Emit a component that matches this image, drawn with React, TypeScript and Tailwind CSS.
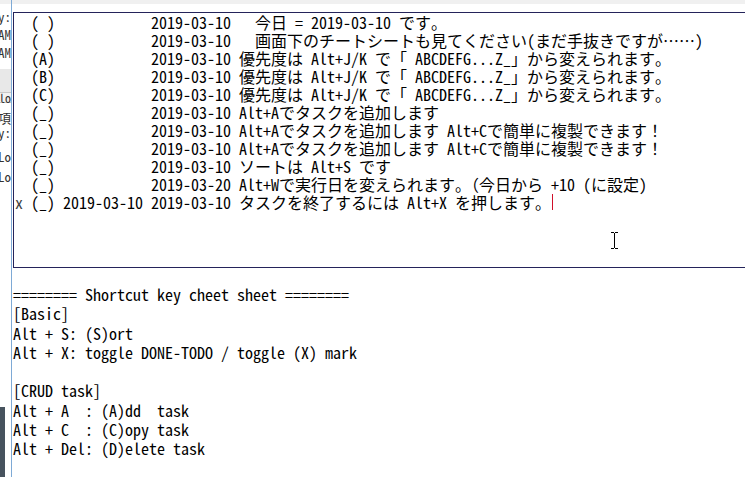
import React from "react";

const mono = {
  fontFamily: '"Noto Sans Mono CJK JP", "Noto Sans CJK JP", "Liberation Mono", monospace',
};

type Row = { mark?: string; pri: string; done?: string; date: string; text: string; caret?: boolean };

const rows: Row[] = [
  { pri: "( )", date: "2019-03-10", text: "\u3000今日 = 2019-03-10 です。" },
  { pri: "( )", date: "2019-03-10", text: "\u3000画面下のチートシートも見てください(まだ手抜きですが……)" },
  { pri: "(A)", date: "2019-03-10", text: "優先度は Alt+J/K で「 ABCDEFG...Z_」から変えられます。" },
  { pri: "(B)", date: "2019-03-10", text: "優先度は Alt+J/K で「 ABCDEFG...Z_」から変えられます。" },
  { pri: "(C)", date: "2019-03-10", text: "優先度は Alt+J/K で「 ABCDEFG...Z_」から変えられます。" },
  { pri: "(_)", date: "2019-03-10", text: "Alt+Aでタスクを追加します" },
  { pri: "(_)", date: "2019-03-10", text: "Alt+Aでタスクを追加します Alt+Cで簡単に複製できます！" },
  { pri: "(_)", date: "2019-03-10", text: "Alt+Aでタスクを追加します Alt+Cで簡単に複製できます！" },
  { pri: "(_)", date: "2019-03-10", text: "ソートは Alt+S です" },
  { pri: "(_)", date: "2019-03-20", text: "Alt+Wで実行日を変えられます。（今日から +10 (に設定)" },
  { mark: "x", pri: "(_)", done: "2019-03-10", date: "2019-03-10", text: "タスクを終了するには Alt+X を押します。", caret: true },
];

const sheet = [
  "======== Shortcut key cheet sheet ========",
  "[Basic]",
  "Alt + S: (S)ort",
  "Alt + X: toggle DONE-TODO / toggle (X) mark",
  "",
  "[CRUD task]",
  "Alt + A  : (A)dd  task",
  "Alt + C  : (C)opy task",
  "Alt + Del: (D)elete task",
];

// right edges of the window sitting behind
const Frag = ({ t, mt }: { t: string; mt: string }) => (
  <div className={`${mt} h-[14px] flex justify-end text-[13px] leading-[14px] text-[#333]`}>
    <span className="whitespace-pre">{t}</span>
  </div>
);

export default function App() {
  return (
    <div className="w-[745px] h-[477px] overflow-hidden bg-white flex text-black" style={mono}>
      {/* sliver of background window */}
      <div className="w-[11px] shrink-0 flex flex-col bg-white overflow-hidden">
        <div className="h-[4px] bg-[#f0f0f0]" />
        <Frag t="ey:" mt="mt-[6px]" />
        <Frag t="AM" mt="mt-[4px]" />
        <Frag t="AM" mt="mt-[4px]" />
        <div className="mt-[9px] h-[24px] bg-[#e8e8e8] border-b border-[#c8c8c8]" />
        <div className="h-[10px] flex justify-end text-[12px] leading-[10px] text-[#333] bg-[#f2f2f2] border-b border-[#c8c8c8]">
          <span className="whitespace-pre">lo</span>
        </div>
        <Frag t="事項" mt="mt-[8px]" />
        <Frag t="ey:" mt="mt-[1px]" />
        <Frag t="Lo" mt="mt-[10px]" />
        <Frag t="Lo" mt="mt-[6px]" />
        <div className="flex-1" />
        <div className="h-[70px] w-[5px] bg-[#47535e]" />
      </div>
      <div className="w-[1px] shrink-0 bg-[#7eaad6]" />

      {/* main window */}
      <div className="flex-1 flex flex-col relative overflow-hidden">
        <div className="h-[4px] bg-[#f0f0f0]" />
        <div className="mt-[8px] ml-[1px] w-[760px] h-[256px] border border-[#24235a] pl-[1px] text-[16px] leading-[18px]">
          {rows.map((r, i) => (
            <div key={i} className="flex h-[18px] whitespace-pre">
              <span className="w-[16px] shrink-0 text-[#444]">{r.mark ?? ""}</span>
              <span className="w-[32px] shrink-0">{r.pri}</span>
              <span className="w-[88px] shrink-0">{r.done ?? ""}</span>
              <span className="w-[88px] shrink-0">{r.date}</span>
              <span>{r.text}</span>
              {r.caret && <span className="ml-[1px] mt-[1px] w-[1px] h-[16px] bg-[#d0102a]" />}
            </div>
          ))}
        </div>

        <div className="mt-[17px] ml-[1px] text-[16px] leading-[19px]">
          {sheet.map((l, i) => (
            <div key={i} className="whitespace-pre h-[19.3px]">{l}</div>
          ))}
        </div>

        {/* mouse I-beam over the text box */}
        <svg className="absolute left-[598px] top-[232px]" width="9" height="17" viewBox="0 0 9 17">
          <path d="M1 0.5h3M5 0.5h3M4.5 1v15M1 16.5h3M5 16.5h3" stroke="#000" strokeWidth="1" fill="none" />
        </svg>
      </div>
    </div>
  );
}
